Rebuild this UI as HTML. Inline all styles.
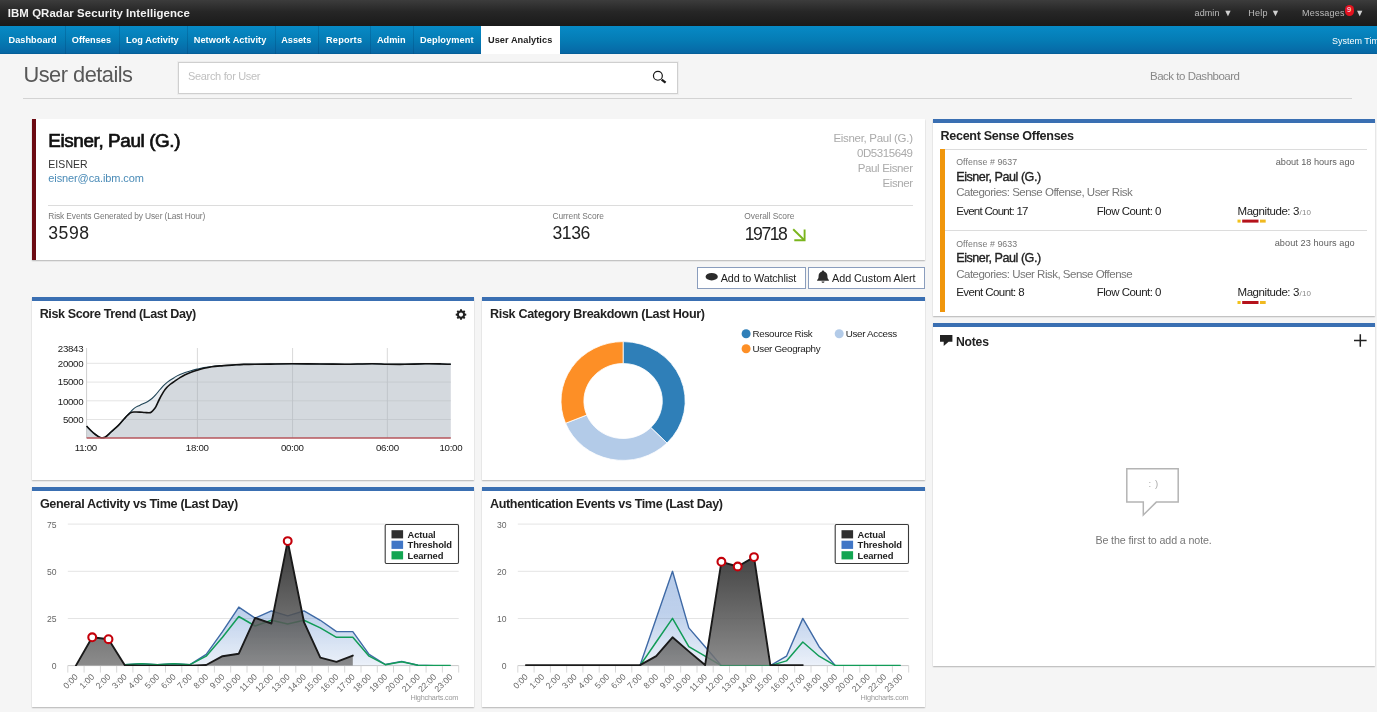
<!DOCTYPE html>
<html lang="en">
<head>
<meta charset="utf-8">
<title>IBM QRadar Security Intelligence - User details</title>
<style>
*{box-sizing:border-box;margin:0;padding:0}
html,body{width:1377px;height:712px;overflow:hidden;background:#f5f5f5;font-family:"Liberation Sans",Arial,sans-serif;color:#222}
.x{position:absolute;white-space:nowrap;z-index:5}
#txt{position:absolute;left:0;top:0;width:1377px;height:712px;z-index:5;will-change:transform}
.b{position:absolute}
#top{left:0;top:0;width:1377px;height:26px;background:linear-gradient(#3c3c3c,#262626 45%,#1a1a1a)}
#nav{left:0;top:26px;width:1377px;height:28px;background:linear-gradient(#078ac6,#057cb5 50%,#0768a5 96%,#04588f)}
.sep{position:absolute;top:26px;width:1px;height:28px;background:rgba(0,50,95,.22)}
#act{left:481px;top:26px;width:78.5px;height:28px;background:#fff}
#badge{left:1344.5px;top:5px;width:9px;height:10.5px;border-radius:4.5px;background:#e2121f}
#badge i{position:absolute;left:0;top:0;width:9px;line-height:10.5px;text-align:center;font-style:normal;font-size:7.5px;color:#fff}
#search{left:178px;top:62px;width:500px;height:31.5px;background:#fff;border:1px solid #cfcfcf;box-shadow:0 0 0 1px rgba(0,0,0,.03)}
#hr{left:23px;top:98px;width:1329px;height:1px;background:#d3d3d3}
.card{position:absolute;background:#fff;box-shadow:0 1px 1.2px rgba(0,0,0,.26)}
.card.bt{border-top:4px solid #3a6fb2}
.ln{position:absolute;height:1px;background:#dcdcdc}
.btn{position:absolute;top:267.2px;height:22px;background:#fff;border:1px solid #8a9dbd}
svg.ov{position:absolute;left:0;top:0;z-index:4;pointer-events:none;will-change:transform}
</style>
</head>
<body>
<div class="b" id="top"></div>
<div class="b" id="nav"></div>
<div class="sep" style="left:65px"></div><div class="sep" style="left:118.5px"></div><div class="sep" style="left:187px"></div>
<div class="sep" style="left:274.5px"></div><div class="sep" style="left:318px"></div><div class="sep" style="left:369.5px"></div>
<div class="sep" style="left:413px"></div>
<div class="b" id="act"></div>
<div class="b" id="badge"><i>9</i></div>
<div class="b" id="search"></div>
<div class="b" id="hr"></div>

<!-- user card -->
<div class="card" style="left:32px;top:118.5px;width:893px;height:141px;border-left:4.5px solid #6c0a12"></div>
<div class="ln" style="left:48px;top:204.5px;width:865px"></div>
<div class="btn" style="left:697px;width:108.6px"></div>
<div class="btn" style="left:808.3px;width:116.6px"></div>

<!-- chart panels -->
<div class="card bt" style="left:32px;top:296.5px;width:442px;height:183px"></div>
<div class="card bt" style="left:482px;top:296.5px;width:443px;height:183px"></div>
<div class="card bt" style="left:32px;top:486.8px;width:442px;height:220.7px"></div>
<div class="card bt" style="left:482px;top:486.8px;width:443px;height:220.7px"></div>

<!-- offenses -->
<div class="card bt" style="left:933px;top:118.6px;width:442px;height:197px"></div>
<div class="ln" style="left:940px;top:149px;width:427px"></div>
<div class="b" style="left:940px;top:149.3px;width:5px;height:162.3px;background:#f0960c"></div>
<div class="ln" style="left:945px;top:230.2px;width:422px"></div>
<!-- notes -->
<div class="card bt" style="left:933px;top:322.6px;width:442px;height:343.2px"></div>

<svg class="ov" width="1377" height="712" viewBox="0 0 1377 712">
<!-- search icon -->
<circle cx="657.9" cy="75.8" r="4.45" fill="none" stroke="#1a1a1a" stroke-width="1.2"/>
<line x1="661.6" y1="79.6" x2="665.6" y2="82.6" stroke="#1a1a1a" stroke-width="2.4" stroke-linecap="butt"/>
<!-- score arrow -->
<g stroke="#7ab51d" stroke-width="1.9" fill="none" stroke-linecap="butt"><path d="M793.2,229.2 L804.4,240.2"/><path d="M794.3,240.2 H804.6 V229.6"/></g>
<!-- eye -->
<ellipse cx="711.7" cy="276.7" rx="6.1" ry="3.7" fill="#2b2b2b"/>
<!-- bell -->
<path d="M823,270.4 c0.7,0 1.1,0.5 1.1,1.1 c2.2,0.6 3.3,2.4 3.3,4.6 c0,2.2 0.5,3.2 1.5,4.0 v0.6 h-11.8 v-0.6 c1,-0.8 1.5,-1.8 1.5,-4.0 c0,-2.2 1.1,-4.0 3.3,-4.6 c0,-0.6 0.4,-1.1 1.1,-1.1z M821.5,281.4 h3 c0,0.8 -0.7,1.3 -1.5,1.3 c-0.8,0 -1.5,-0.5 -1.5,-1.3z" fill="#2b2b2b"/>
<!-- magnitude bars -->
<g id="mag1"><rect x="1237.5" y="219.6" width="3.1" height="3" fill="#f2c21a"/><rect x="1242.2" y="219.6" width="16.3" height="3" fill="#b5121b"/><rect x="1260" y="219.6" width="5.7" height="3" fill="#f0b920"/></g>
<g id="mag2"><rect x="1237.5" y="301" width="3.1" height="3" fill="#f2c21a"/><rect x="1242.2" y="301" width="16.3" height="3" fill="#b5121b"/><rect x="1260" y="301" width="5.7" height="3" fill="#f0b920"/></g>
<!-- notes icon -->
<path d="M940,334.9 H952.4 V341.8 H948.6 L943.7,345.9 V341.8 H940Z" fill="#222"/>
<!-- plus -->
<path d="M1354,340.5 H1366.6 M1360.3,334.2 V346.8" stroke="#222" stroke-width="1.5" fill="none"/>
<!-- bubble -->
<path d="M1126.8,468.7 H1178.2 V502.1 H1156.3 L1143.3,515 V502.1 H1126.8Z" fill="none" stroke="#b4b4b4" stroke-width="1.5" stroke-linejoin="miter"/>
<g font-family="Liberation Sans, Arial, sans-serif" font-size="9.7" fill="#222">
<line x1="86.6" x2="450.8" y1="363.3" y2="363.3" stroke="#e4e4e4" stroke-width="1"/>
<line x1="86.6" x2="450.8" y1="382.1" y2="382.1" stroke="#e4e4e4" stroke-width="1"/>
<line x1="86.6" x2="450.8" y1="400.8" y2="400.8" stroke="#e4e4e4" stroke-width="1"/>
<line x1="86.6" x2="450.8" y1="419.5" y2="419.5" stroke="#e4e4e4" stroke-width="1"/>
<line x1="197.4" x2="197.4" y1="348" y2="438" stroke="#d9d9d9" stroke-width="1"/>
<line x1="292.6" x2="292.6" y1="348" y2="438" stroke="#d9d9d9" stroke-width="1"/>
<line x1="387.3" x2="387.3" y1="348" y2="438" stroke="#d9d9d9" stroke-width="1"/>
<line x1="86.6" x2="86.6" y1="348" y2="438" stroke="#cfcfcf" stroke-width="1"/>
<path d="M86.6,426.2 C87.7,427.2 90.8,430.7 93.0,432.5 C95.2,434.3 97.7,436.4 99.7,437.2 C101.7,438.0 103.1,438.1 105.0,437.2 C106.9,436.3 108.8,434.0 111.0,432.0 C113.2,430.0 116.2,427.7 118.4,425.4 C120.7,423.1 122.5,420.5 124.5,418.3 C126.5,416.1 128.8,413.8 130.4,412.1 C132.1,410.4 132.8,409.2 134.4,408.1 C136.0,407.0 137.8,406.3 140.0,405.2 C142.2,404.1 145.8,402.5 147.8,401.4 C149.8,400.3 150.7,399.6 152.0,398.5 C153.3,397.4 154.5,396.2 155.8,394.7 C157.1,393.2 158.4,391.3 160.0,389.5 C161.6,387.7 163.4,385.6 165.1,384.1 C166.8,382.6 168.4,381.4 170.0,380.3 C171.6,379.2 172.8,378.3 174.5,377.4 C176.2,376.4 178.2,375.4 180.0,374.6 C181.8,373.8 183.3,373.2 185.1,372.6 C186.9,372.0 189.0,371.3 191.0,370.7 C193.0,370.1 194.9,369.6 197.1,369.1 C199.3,368.6 201.6,368.0 204.0,367.6 C206.4,367.2 209.1,366.8 211.8,366.5 C214.5,366.2 217.3,366.0 220.0,365.8 C222.7,365.6 225.1,365.5 227.8,365.3 C230.5,365.1 233.3,365.0 236.0,364.8 C238.7,364.6 240.6,364.5 243.8,364.4 C247.0,364.3 250.6,364.4 255.0,364.3 C259.4,364.2 263.8,364.2 270.0,364.1 C276.2,364.0 283.7,363.8 292.0,363.8 C300.3,363.8 311.2,363.9 320.0,364.0 C328.8,364.1 336.3,364.2 345.0,364.2 C353.7,364.1 365.0,363.7 372.0,363.7 C379.0,363.7 381.5,364.1 387.0,364.2 C392.5,364.3 398.7,364.4 405.0,364.3 C411.3,364.2 419.2,363.9 425.0,363.8 C430.8,363.7 435.7,363.8 440.0,363.9 C444.3,364.0 449.0,364.1 450.8,364.2 L450.8,438 L86.6,438 Z" fill="rgba(150,170,185,0.22)"/>
<path d="M86.6,426.2 C87.7,427.2 90.8,430.7 93.0,432.5 C95.2,434.3 97.7,436.4 99.7,437.2 C101.7,438.0 103.1,438.1 105.0,437.2 C106.9,436.3 108.8,434.0 111.0,432.0 C113.2,430.0 116.2,427.6 118.4,425.4 C120.7,423.1 122.5,420.6 124.5,418.5 C126.5,416.4 128.7,414.0 130.4,412.9 C132.2,411.8 133.4,412.1 135.0,412.0 C136.6,411.9 138.1,412.0 139.8,412.1 C141.5,412.2 143.2,412.4 145.0,412.5 C146.8,412.6 149.1,412.9 150.4,412.6 C151.7,412.3 152.1,411.5 153.0,410.5 C153.9,409.5 154.6,408.9 155.8,406.8 C157.0,404.7 158.4,400.9 160.0,398.0 C161.6,395.1 163.4,391.6 165.1,389.4 C166.8,387.1 168.4,385.8 170.0,384.5 C171.6,383.2 172.8,382.5 174.5,381.4 C176.2,380.2 178.2,378.7 180.0,377.6 C181.8,376.5 183.3,375.6 185.1,374.7 C186.9,373.8 189.0,372.9 191.0,372.2 C193.0,371.4 194.9,370.8 197.1,370.2 C199.3,369.6 201.6,368.9 204.0,368.3 C206.4,367.7 209.1,367.1 211.8,366.7 C214.5,366.3 217.3,366.1 220.0,365.9 C222.7,365.7 225.1,365.6 227.8,365.4 C230.5,365.2 233.3,365.0 236.0,364.8 C238.7,364.6 240.6,364.5 243.8,364.4 C247.0,364.3 250.6,364.4 255.0,364.3 C259.4,364.2 263.8,364.2 270.0,364.1 C276.2,364.0 283.7,363.8 292.0,363.8 C300.3,363.8 311.2,363.9 320.0,364.0 C328.8,364.1 336.3,364.2 345.0,364.2 C353.7,364.1 365.0,363.7 372.0,363.7 C379.0,363.7 381.5,364.1 387.0,364.2 C392.5,364.3 398.7,364.4 405.0,364.3 C411.3,364.2 419.2,363.9 425.0,363.8 C430.8,363.7 435.7,363.8 440.0,363.9 C444.3,364.0 449.0,364.1 450.8,364.2 L450.8,438 L86.6,438 Z" fill="rgba(160,168,175,0.28)"/>
<path d="M86.6,426.2 C87.7,427.2 90.8,430.7 93.0,432.5 C95.2,434.3 97.7,436.4 99.7,437.2 C101.7,438.0 103.1,438.1 105.0,437.2 C106.9,436.3 108.8,434.0 111.0,432.0 C113.2,430.0 116.2,427.7 118.4,425.4 C120.7,423.1 122.5,420.5 124.5,418.3 C126.5,416.1 128.8,413.8 130.4,412.1 C132.1,410.4 132.8,409.2 134.4,408.1 C136.0,407.0 137.8,406.3 140.0,405.2 C142.2,404.1 145.8,402.5 147.8,401.4 C149.8,400.3 150.7,399.6 152.0,398.5 C153.3,397.4 154.5,396.2 155.8,394.7 C157.1,393.2 158.4,391.3 160.0,389.5 C161.6,387.7 163.4,385.6 165.1,384.1 C166.8,382.6 168.4,381.4 170.0,380.3 C171.6,379.2 172.8,378.3 174.5,377.4 C176.2,376.4 178.2,375.4 180.0,374.6 C181.8,373.8 183.3,373.2 185.1,372.6 C186.9,372.0 189.0,371.3 191.0,370.7 C193.0,370.1 194.9,369.6 197.1,369.1 C199.3,368.6 201.6,368.0 204.0,367.6 C206.4,367.2 209.1,366.8 211.8,366.5 C214.5,366.2 217.3,366.0 220.0,365.8 C222.7,365.6 225.1,365.5 227.8,365.3 C230.5,365.1 233.3,365.0 236.0,364.8 C238.7,364.6 240.6,364.5 243.8,364.4 C247.0,364.3 250.6,364.4 255.0,364.3 C259.4,364.2 263.8,364.2 270.0,364.1 C276.2,364.0 283.7,363.8 292.0,363.8 C300.3,363.8 311.2,363.9 320.0,364.0 C328.8,364.1 336.3,364.2 345.0,364.2 C353.7,364.1 365.0,363.7 372.0,363.7 C379.0,363.7 381.5,364.1 387.0,364.2 C392.5,364.3 398.7,364.4 405.0,364.3 C411.3,364.2 419.2,363.9 425.0,363.8 C430.8,363.7 435.7,363.8 440.0,363.9 C444.3,364.0 449.0,364.1 450.8,364.2" fill="none" stroke="#1f4456" stroke-width="1.1"/>
<path d="M86.6,426.2 C87.7,427.2 90.8,430.7 93.0,432.5 C95.2,434.3 97.7,436.4 99.7,437.2 C101.7,438.0 103.1,438.1 105.0,437.2 C106.9,436.3 108.8,434.0 111.0,432.0 C113.2,430.0 116.2,427.6 118.4,425.4 C120.7,423.1 122.5,420.6 124.5,418.5 C126.5,416.4 128.7,414.0 130.4,412.9 C132.2,411.8 133.4,412.1 135.0,412.0 C136.6,411.9 138.1,412.0 139.8,412.1 C141.5,412.2 143.2,412.4 145.0,412.5 C146.8,412.6 149.1,412.9 150.4,412.6 C151.7,412.3 152.1,411.5 153.0,410.5 C153.9,409.5 154.6,408.9 155.8,406.8 C157.0,404.7 158.4,400.9 160.0,398.0 C161.6,395.1 163.4,391.6 165.1,389.4 C166.8,387.1 168.4,385.8 170.0,384.5 C171.6,383.2 172.8,382.5 174.5,381.4 C176.2,380.2 178.2,378.7 180.0,377.6 C181.8,376.5 183.3,375.6 185.1,374.7 C186.9,373.8 189.0,372.9 191.0,372.2 C193.0,371.4 194.9,370.8 197.1,370.2 C199.3,369.6 201.6,368.9 204.0,368.3 C206.4,367.7 209.1,367.1 211.8,366.7 C214.5,366.3 217.3,366.1 220.0,365.9 C222.7,365.7 225.1,365.6 227.8,365.4 C230.5,365.2 233.3,365.0 236.0,364.8 C238.7,364.6 240.6,364.5 243.8,364.4 C247.0,364.3 250.6,364.4 255.0,364.3 C259.4,364.2 263.8,364.2 270.0,364.1 C276.2,364.0 283.7,363.8 292.0,363.8 C300.3,363.8 311.2,363.9 320.0,364.0 C328.8,364.1 336.3,364.2 345.0,364.2 C353.7,364.1 365.0,363.7 372.0,363.7 C379.0,363.7 381.5,364.1 387.0,364.2 C392.5,364.3 398.7,364.4 405.0,364.3 C411.3,364.2 419.2,363.9 425.0,363.8 C430.8,363.7 435.7,363.8 440.0,363.9 C444.3,364.0 449.0,364.1 450.8,364.2" fill="none" stroke="#111" stroke-width="1.6" stroke-linejoin="round"/>
<line x1="86.6" x2="450.8" y1="437.9" y2="437.9" stroke="#b6565c" stroke-width="1.5"/>
<text x="83.3" y="352.1" text-anchor="end" letter-spacing="-0.3">23843</text>
<text x="83.3" y="366.8" text-anchor="end" letter-spacing="-0.3">20000</text>
<text x="83.3" y="385.3" text-anchor="end" letter-spacing="-0.3">15000</text>
<text x="83.3" y="404.5" text-anchor="end" letter-spacing="-0.3">10000</text>
<text x="83.3" y="423.1" text-anchor="end" letter-spacing="-0.3">5000</text>
<text x="85.8" y="451" text-anchor="middle" letter-spacing="-0.3">11:00</text>
<text x="197.2" y="451" text-anchor="middle" letter-spacing="-0.3">18:00</text>
<text x="292.3" y="451" text-anchor="middle" letter-spacing="-0.3">00:00</text>
<text x="387.4" y="451" text-anchor="middle" letter-spacing="-0.3">06:00</text>
<text x="450.9" y="451" text-anchor="middle" letter-spacing="-0.3">10:00</text>
<path d="M459.89,310.60 L460.09,309.33 L461.91,309.33 L462.11,310.60 L463.05,310.99 L464.09,310.23 L465.37,311.51 L464.61,312.55 L465.00,313.49 L466.27,313.69 L466.27,315.51 L465.00,315.71 L464.61,316.65 L465.37,317.69 L464.09,318.97 L463.05,318.21 L462.11,318.60 L461.91,319.87 L460.09,319.87 L459.89,318.60 L458.95,318.21 L457.91,318.97 L456.63,317.69 L457.39,316.65 L457.00,315.71 L455.73,315.51 L455.73,313.69 L457.00,313.49 L457.39,312.55 L456.63,311.51 L457.91,310.23 L458.95,310.99Z M463.1,314.6 a2.1,2.1 0 1,0 -4.2,0 a2.1,2.1 0 1,0 4.2,0Z" fill="#222" fill-rule="evenodd"/>
</g>
<path d="M623.10,341.60 A62.1,59.4 0 0 1 667.01,443.00 L650.82,427.52 A39.2,37.5 0 0 0 623.10,363.50Z" fill="#2f7fb8" stroke="#fff" stroke-width="0.8"/>
<path d="M667.01,443.00 A62.1,59.4 0 0 1 565.52,423.25 L586.75,415.05 A39.2,37.5 0 0 0 650.82,427.52Z" fill="#b3cbe8" stroke="#fff" stroke-width="0.8"/>
<path d="M565.52,423.25 A62.1,59.4 0 0 1 623.10,341.60 L623.10,363.50 A39.2,37.5 0 0 0 586.75,415.05Z" fill="#fd8f26" stroke="#fff" stroke-width="0.8"/>
<circle cx="746.1" cy="333.7" r="4.5" fill="#2f7fb8"/>
<circle cx="839.2" cy="333.7" r="4.5" fill="#b3cbe8"/>
<circle cx="746.1" cy="348.8" r="4.5" fill="#fd8f26"/>
<defs><linearGradient id="gag" gradientUnits="userSpaceOnUse" x1="0" y1="545" x2="0" y2="666"><stop offset="0" stop-color="#1b1b1b" stop-opacity="0.85"/><stop offset="1" stop-color="#787878" stop-opacity="0.85"/></linearGradient><linearGradient id="gtg" gradientUnits="userSpaceOnUse" x1="0" y1="570" x2="0" y2="666"><stop offset="0" stop-color="#4076c6" stop-opacity="0.38"/><stop offset="0.45" stop-color="#4076c6" stop-opacity="0.34"/><stop offset="1" stop-color="#4076c6" stop-opacity="0.1"/></linearGradient></defs>
<clipPath id="cpg"><rect x="62.8" y="515" width="400.9" height="151"/></clipPath>
<g font-family="Liberation Sans, Arial, sans-serif" font-size="8.6" fill="#666">
<line x1="67.8" x2="458.7" y1="524.1" y2="524.1" stroke="#e4e4e4" stroke-width="1"/>
<text x="56.6" y="527.6" text-anchor="end">75</text>
<line x1="67.8" x2="458.7" y1="571.3" y2="571.3" stroke="#e4e4e4" stroke-width="1"/>
<text x="56.6" y="574.8" text-anchor="end">50</text>
<line x1="67.8" x2="458.7" y1="618.5" y2="618.5" stroke="#e4e4e4" stroke-width="1"/>
<text x="56.6" y="622.0" text-anchor="end">25</text>
<line x1="67.8" x2="458.7" y1="665.6" y2="665.6" stroke="#c8c8c8" stroke-width="1"/>
<text x="56.6" y="669.1" text-anchor="end">0</text>
<line x1="67.8" x2="67.8" y1="665.6" y2="672.6" stroke="#d8d8d8" stroke-width="1"/>
<line x1="84.1" x2="84.1" y1="665.6" y2="672.6" stroke="#d8d8d8" stroke-width="1"/>
<line x1="100.4" x2="100.4" y1="665.6" y2="672.6" stroke="#d8d8d8" stroke-width="1"/>
<line x1="116.7" x2="116.7" y1="665.6" y2="672.6" stroke="#d8d8d8" stroke-width="1"/>
<line x1="132.9" x2="132.9" y1="665.6" y2="672.6" stroke="#d8d8d8" stroke-width="1"/>
<line x1="149.2" x2="149.2" y1="665.6" y2="672.6" stroke="#d8d8d8" stroke-width="1"/>
<line x1="165.5" x2="165.5" y1="665.6" y2="672.6" stroke="#d8d8d8" stroke-width="1"/>
<line x1="181.8" x2="181.8" y1="665.6" y2="672.6" stroke="#d8d8d8" stroke-width="1"/>
<line x1="198.1" x2="198.1" y1="665.6" y2="672.6" stroke="#d8d8d8" stroke-width="1"/>
<line x1="214.4" x2="214.4" y1="665.6" y2="672.6" stroke="#d8d8d8" stroke-width="1"/>
<line x1="230.7" x2="230.7" y1="665.6" y2="672.6" stroke="#d8d8d8" stroke-width="1"/>
<line x1="247.0" x2="247.0" y1="665.6" y2="672.6" stroke="#d8d8d8" stroke-width="1"/>
<line x1="263.2" x2="263.2" y1="665.6" y2="672.6" stroke="#d8d8d8" stroke-width="1"/>
<line x1="279.5" x2="279.5" y1="665.6" y2="672.6" stroke="#d8d8d8" stroke-width="1"/>
<line x1="295.8" x2="295.8" y1="665.6" y2="672.6" stroke="#d8d8d8" stroke-width="1"/>
<line x1="312.1" x2="312.1" y1="665.6" y2="672.6" stroke="#d8d8d8" stroke-width="1"/>
<line x1="328.4" x2="328.4" y1="665.6" y2="672.6" stroke="#d8d8d8" stroke-width="1"/>
<line x1="344.7" x2="344.7" y1="665.6" y2="672.6" stroke="#d8d8d8" stroke-width="1"/>
<line x1="361.0" x2="361.0" y1="665.6" y2="672.6" stroke="#d8d8d8" stroke-width="1"/>
<line x1="377.3" x2="377.3" y1="665.6" y2="672.6" stroke="#d8d8d8" stroke-width="1"/>
<line x1="393.5" x2="393.5" y1="665.6" y2="672.6" stroke="#d8d8d8" stroke-width="1"/>
<line x1="409.8" x2="409.8" y1="665.6" y2="672.6" stroke="#d8d8d8" stroke-width="1"/>
<line x1="426.1" x2="426.1" y1="665.6" y2="672.6" stroke="#d8d8d8" stroke-width="1"/>
<line x1="442.4" x2="442.4" y1="665.6" y2="672.6" stroke="#d8d8d8" stroke-width="1"/>
<line x1="458.7" x2="458.7" y1="665.6" y2="672.6" stroke="#d8d8d8" stroke-width="1"/>
<text transform="translate(78.5,677.4) rotate(-45)" text-anchor="end">0:00</text>
<text transform="translate(94.8,677.4) rotate(-45)" text-anchor="end">1:00</text>
<text transform="translate(111.1,677.4) rotate(-45)" text-anchor="end">2:00</text>
<text transform="translate(127.4,677.4) rotate(-45)" text-anchor="end">3:00</text>
<text transform="translate(143.7,677.4) rotate(-45)" text-anchor="end">4:00</text>
<text transform="translate(160.0,677.4) rotate(-45)" text-anchor="end">5:00</text>
<text transform="translate(176.3,677.4) rotate(-45)" text-anchor="end">6:00</text>
<text transform="translate(192.6,677.4) rotate(-45)" text-anchor="end">7:00</text>
<text transform="translate(208.8,677.4) rotate(-45)" text-anchor="end">8:00</text>
<text transform="translate(225.1,677.4) rotate(-45)" text-anchor="end">9:00</text>
<text transform="translate(241.4,677.4) rotate(-45)" text-anchor="end">10:00</text>
<text transform="translate(257.7,677.4) rotate(-45)" text-anchor="end">11:00</text>
<text transform="translate(274.0,677.4) rotate(-45)" text-anchor="end">12:00</text>
<text transform="translate(290.3,677.4) rotate(-45)" text-anchor="end">13:00</text>
<text transform="translate(306.6,677.4) rotate(-45)" text-anchor="end">14:00</text>
<text transform="translate(322.9,677.4) rotate(-45)" text-anchor="end">15:00</text>
<text transform="translate(339.1,677.4) rotate(-45)" text-anchor="end">16:00</text>
<text transform="translate(355.4,677.4) rotate(-45)" text-anchor="end">17:00</text>
<text transform="translate(371.7,677.4) rotate(-45)" text-anchor="end">18:00</text>
<text transform="translate(388.0,677.4) rotate(-45)" text-anchor="end">19:00</text>
<text transform="translate(404.3,677.4) rotate(-45)" text-anchor="end">20:00</text>
<text transform="translate(420.6,677.4) rotate(-45)" text-anchor="end">21:00</text>
<text transform="translate(436.9,677.4) rotate(-45)" text-anchor="end">22:00</text>
<text transform="translate(453.2,677.4) rotate(-45)" text-anchor="end">23:00</text>
<g clip-path="url(#cpg)">
<polygon points="124.8,665.6 124.8,664.7 141.1,663.7 157.4,664.7 173.7,663.7 190.0,664.7 206.2,654.3 222.5,631.6 238.8,607.1 255.1,618.1 271.4,610.9 287.7,615.8 304.0,610.9 320.3,620.3 336.5,631.6 352.8,631.6 369.1,654.3 385.4,664.5 401.7,661.4 418.0,665.2 434.3,665.6 450.6,665.6 450.6,665.6" fill="url(#gtg)"/>
<polyline points="124.8,664.7 141.1,663.7 157.4,664.7 173.7,663.7 190.0,664.7 206.2,654.3 222.5,631.6 238.8,607.1 255.1,618.1 271.4,610.9 287.7,615.8 304.0,610.9 320.3,620.3 336.5,631.6 352.8,631.6 369.1,654.3 385.4,664.5 401.7,661.4 418.0,665.2 434.3,665.6 450.6,665.6" fill="none" stroke="#3f6aa6" stroke-width="1.4" stroke-linejoin="round"/>
<polyline points="124.8,664.7 141.1,663.7 157.4,664.7 173.7,663.7 190.0,664.7 206.2,656.2 222.5,637.3 238.8,616.5 255.1,626.0 271.4,620.3 287.7,624.1 304.0,620.3 320.3,627.9 336.5,637.3 352.8,637.3 369.1,656.2 385.4,664.7 401.7,661.8 418.0,665.2 434.3,665.6 450.6,665.6" fill="none" stroke="#129c58" stroke-width="1.5" stroke-linejoin="round"/>
<polygon points="75.9,665.6 75.9,665.6 92.2,637.3 108.5,639.2 124.8,665.2 141.1,665.6 157.4,665.6 173.7,665.6 190.0,665.6 206.2,665.0 222.5,656.2 238.8,653.7 255.1,617.9 271.4,623.5 287.7,541.1 304.0,622.2 320.3,657.7 336.5,661.8 352.8,655.6 352.8,665.6" fill="url(#gag)"/>
<polyline points="75.9,665.6 92.2,637.3 108.5,639.2 124.8,665.2 141.1,665.6 157.4,665.6 173.7,665.6 190.0,665.6 206.2,665.0 222.5,656.2 238.8,653.7 255.1,617.9 271.4,623.5 287.7,541.1 304.0,622.2 320.3,657.7 336.5,661.8 352.8,655.6" fill="none" stroke="#1a1a1a" stroke-width="1.9" stroke-linejoin="round" stroke-linecap="round"/>
</g>
<circle cx="92.2" cy="637.3" r="3.9" fill="#fff" stroke="#c4000a" stroke-width="2.1"/>
<circle cx="108.5" cy="639.2" r="3.9" fill="#fff" stroke="#c4000a" stroke-width="2.1"/>
<circle cx="287.7" cy="541.1" r="3.9" fill="#fff" stroke="#c4000a" stroke-width="2.1"/>
<rect x="385.2" y="524.5" width="73.3" height="39" rx="1.2" fill="#fff" stroke="#3a3a3a" stroke-width="1.1"/>
<rect x="391.5" y="530.2" width="11.6" height="8.2" fill="#2f2f2f"/>
<text x="407.5" y="537.7" font-weight="bold" font-size="9.4" fill="#222" letter-spacing="-0.1">Actual</text>
<rect x="391.5" y="540.7" width="11.6" height="8.2" fill="#4076c6"/>
<text x="407.5" y="548.2" font-weight="bold" font-size="9.4" fill="#222" letter-spacing="-0.1">Threshold</text>
<rect x="391.5" y="551.2" width="11.6" height="8.2" fill="#12a552"/>
<text x="407.5" y="558.7" font-weight="bold" font-size="9.4" fill="#222" letter-spacing="-0.1">Learned</text>
</g>
<defs><linearGradient id="gaa" gradientUnits="userSpaceOnUse" x1="0" y1="545" x2="0" y2="666"><stop offset="0" stop-color="#1b1b1b" stop-opacity="0.85"/><stop offset="1" stop-color="#787878" stop-opacity="0.85"/></linearGradient><linearGradient id="gta" gradientUnits="userSpaceOnUse" x1="0" y1="570" x2="0" y2="666"><stop offset="0" stop-color="#4076c6" stop-opacity="0.38"/><stop offset="0.45" stop-color="#4076c6" stop-opacity="0.34"/><stop offset="1" stop-color="#4076c6" stop-opacity="0.1"/></linearGradient></defs>
<clipPath id="cpa"><rect x="512.8" y="515" width="400.9" height="151"/></clipPath>
<g font-family="Liberation Sans, Arial, sans-serif" font-size="8.6" fill="#666">
<line x1="517.8" x2="908.7" y1="524.1" y2="524.1" stroke="#e4e4e4" stroke-width="1"/>
<text x="506.6" y="527.6" text-anchor="end">30</text>
<line x1="517.8" x2="908.7" y1="571.3" y2="571.3" stroke="#e4e4e4" stroke-width="1"/>
<text x="506.6" y="574.8" text-anchor="end">20</text>
<line x1="517.8" x2="908.7" y1="618.5" y2="618.5" stroke="#e4e4e4" stroke-width="1"/>
<text x="506.6" y="622.0" text-anchor="end">10</text>
<line x1="517.8" x2="908.7" y1="665.6" y2="665.6" stroke="#c8c8c8" stroke-width="1"/>
<text x="506.6" y="669.1" text-anchor="end">0</text>
<line x1="517.8" x2="517.8" y1="665.6" y2="672.6" stroke="#d8d8d8" stroke-width="1"/>
<line x1="534.1" x2="534.1" y1="665.6" y2="672.6" stroke="#d8d8d8" stroke-width="1"/>
<line x1="550.4" x2="550.4" y1="665.6" y2="672.6" stroke="#d8d8d8" stroke-width="1"/>
<line x1="566.7" x2="566.7" y1="665.6" y2="672.6" stroke="#d8d8d8" stroke-width="1"/>
<line x1="582.9" x2="582.9" y1="665.6" y2="672.6" stroke="#d8d8d8" stroke-width="1"/>
<line x1="599.2" x2="599.2" y1="665.6" y2="672.6" stroke="#d8d8d8" stroke-width="1"/>
<line x1="615.5" x2="615.5" y1="665.6" y2="672.6" stroke="#d8d8d8" stroke-width="1"/>
<line x1="631.8" x2="631.8" y1="665.6" y2="672.6" stroke="#d8d8d8" stroke-width="1"/>
<line x1="648.1" x2="648.1" y1="665.6" y2="672.6" stroke="#d8d8d8" stroke-width="1"/>
<line x1="664.4" x2="664.4" y1="665.6" y2="672.6" stroke="#d8d8d8" stroke-width="1"/>
<line x1="680.7" x2="680.7" y1="665.6" y2="672.6" stroke="#d8d8d8" stroke-width="1"/>
<line x1="697.0" x2="697.0" y1="665.6" y2="672.6" stroke="#d8d8d8" stroke-width="1"/>
<line x1="713.2" x2="713.2" y1="665.6" y2="672.6" stroke="#d8d8d8" stroke-width="1"/>
<line x1="729.5" x2="729.5" y1="665.6" y2="672.6" stroke="#d8d8d8" stroke-width="1"/>
<line x1="745.8" x2="745.8" y1="665.6" y2="672.6" stroke="#d8d8d8" stroke-width="1"/>
<line x1="762.1" x2="762.1" y1="665.6" y2="672.6" stroke="#d8d8d8" stroke-width="1"/>
<line x1="778.4" x2="778.4" y1="665.6" y2="672.6" stroke="#d8d8d8" stroke-width="1"/>
<line x1="794.7" x2="794.7" y1="665.6" y2="672.6" stroke="#d8d8d8" stroke-width="1"/>
<line x1="811.0" x2="811.0" y1="665.6" y2="672.6" stroke="#d8d8d8" stroke-width="1"/>
<line x1="827.3" x2="827.3" y1="665.6" y2="672.6" stroke="#d8d8d8" stroke-width="1"/>
<line x1="843.5" x2="843.5" y1="665.6" y2="672.6" stroke="#d8d8d8" stroke-width="1"/>
<line x1="859.8" x2="859.8" y1="665.6" y2="672.6" stroke="#d8d8d8" stroke-width="1"/>
<line x1="876.1" x2="876.1" y1="665.6" y2="672.6" stroke="#d8d8d8" stroke-width="1"/>
<line x1="892.4" x2="892.4" y1="665.6" y2="672.6" stroke="#d8d8d8" stroke-width="1"/>
<line x1="908.7" x2="908.7" y1="665.6" y2="672.6" stroke="#d8d8d8" stroke-width="1"/>
<text transform="translate(528.5,677.4) rotate(-45)" text-anchor="end">0:00</text>
<text transform="translate(544.8,677.4) rotate(-45)" text-anchor="end">1:00</text>
<text transform="translate(561.1,677.4) rotate(-45)" text-anchor="end">2:00</text>
<text transform="translate(577.4,677.4) rotate(-45)" text-anchor="end">3:00</text>
<text transform="translate(593.7,677.4) rotate(-45)" text-anchor="end">4:00</text>
<text transform="translate(610.0,677.4) rotate(-45)" text-anchor="end">5:00</text>
<text transform="translate(626.3,677.4) rotate(-45)" text-anchor="end">6:00</text>
<text transform="translate(642.6,677.4) rotate(-45)" text-anchor="end">7:00</text>
<text transform="translate(658.8,677.4) rotate(-45)" text-anchor="end">8:00</text>
<text transform="translate(675.1,677.4) rotate(-45)" text-anchor="end">9:00</text>
<text transform="translate(691.4,677.4) rotate(-45)" text-anchor="end">10:00</text>
<text transform="translate(707.7,677.4) rotate(-45)" text-anchor="end">11:00</text>
<text transform="translate(724.0,677.4) rotate(-45)" text-anchor="end">12:00</text>
<text transform="translate(740.3,677.4) rotate(-45)" text-anchor="end">13:00</text>
<text transform="translate(756.6,677.4) rotate(-45)" text-anchor="end">14:00</text>
<text transform="translate(772.9,677.4) rotate(-45)" text-anchor="end">15:00</text>
<text transform="translate(789.1,677.4) rotate(-45)" text-anchor="end">16:00</text>
<text transform="translate(805.4,677.4) rotate(-45)" text-anchor="end">17:00</text>
<text transform="translate(821.7,677.4) rotate(-45)" text-anchor="end">18:00</text>
<text transform="translate(838.0,677.4) rotate(-45)" text-anchor="end">19:00</text>
<text transform="translate(854.3,677.4) rotate(-45)" text-anchor="end">20:00</text>
<text transform="translate(870.6,677.4) rotate(-45)" text-anchor="end">21:00</text>
<text transform="translate(886.9,677.4) rotate(-45)" text-anchor="end">22:00</text>
<text transform="translate(903.2,677.4) rotate(-45)" text-anchor="end">23:00</text>
<g clip-path="url(#cpa)">
<polygon points="640.0,665.6 640.0,665.6 656.2,618.4 672.5,571.3 688.8,627.9 705.1,646.7 721.4,665.6 737.7,665.6 754.0,665.6 770.3,665.6 786.5,656.2 802.8,618.4 819.1,646.7 835.4,665.6 851.7,665.6 868.0,665.6 884.3,665.6 900.6,665.6 900.6,665.6" fill="url(#gta)"/>
<polyline points="640.0,665.6 656.2,618.4 672.5,571.3 688.8,627.9 705.1,646.7 721.4,665.6 737.7,665.6 754.0,665.6 770.3,665.6 786.5,656.2 802.8,618.4 819.1,646.7 835.4,665.6 851.7,665.6 868.0,665.6 884.3,665.6 900.6,665.6" fill="none" stroke="#3f6aa6" stroke-width="1.4" stroke-linejoin="round"/>
<polyline points="640.0,665.6 656.2,642.0 672.5,618.4 688.8,646.7 705.1,656.2 721.4,665.6 737.7,665.6 754.0,665.6 770.3,665.6 786.5,660.9 802.8,642.0 819.1,656.2 835.4,665.6 851.7,665.6 868.0,665.6 884.3,665.6 900.6,665.6" fill="none" stroke="#129c58" stroke-width="1.5" stroke-linejoin="round"/>
<polygon points="525.9,665.6 525.9,665.1 542.2,665.1 558.5,665.1 574.8,665.1 591.1,665.1 607.4,665.1 623.7,665.1 640.0,665.1 656.2,656.2 672.5,637.3 688.8,651.4 705.1,665.1 721.4,561.8 737.7,566.5 754.0,557.1 770.3,665.1 786.5,665.1 802.8,665.1 802.8,665.6" fill="url(#gaa)"/>
<polyline points="525.9,665.1 542.2,665.1 558.5,665.1 574.8,665.1 591.1,665.1 607.4,665.1 623.7,665.1 640.0,665.1 656.2,656.2 672.5,637.3 688.8,651.4 705.1,665.1 721.4,561.8 737.7,566.5 754.0,557.1 770.3,665.1 786.5,665.1 802.8,665.1" fill="none" stroke="#1a1a1a" stroke-width="1.9" stroke-linejoin="round" stroke-linecap="round"/>
</g>
<circle cx="721.4" cy="561.8" r="3.9" fill="#fff" stroke="#c4000a" stroke-width="2.1"/>
<circle cx="737.7" cy="566.5" r="3.9" fill="#fff" stroke="#c4000a" stroke-width="2.1"/>
<circle cx="754.0" cy="557.1" r="3.9" fill="#fff" stroke="#c4000a" stroke-width="2.1"/>
<rect x="835.2" y="524.5" width="73.3" height="39" rx="1.2" fill="#fff" stroke="#3a3a3a" stroke-width="1.1"/>
<rect x="841.5" y="530.2" width="11.6" height="8.2" fill="#2f2f2f"/>
<text x="857.5" y="537.7" font-weight="bold" font-size="9.4" fill="#222" letter-spacing="-0.1">Actual</text>
<rect x="841.5" y="540.7" width="11.6" height="8.2" fill="#4076c6"/>
<text x="857.5" y="548.2" font-weight="bold" font-size="9.4" fill="#222" letter-spacing="-0.1">Threshold</text>
<rect x="841.5" y="551.2" width="11.6" height="8.2" fill="#12a552"/>
<text x="857.5" y="558.7" font-weight="bold" font-size="9.4" fill="#222" letter-spacing="-0.1">Learned</text>
</g>
</svg>
<div id="txt">
<div class="x" style="left:7.75px;top:8px;font-size:11.4px;line-height:11.4px;color:#f2f2f2;font-weight:bold;letter-spacing:0.092px;">IBM QRadar Security Intelligence</div>
<div class="x" style="left:1194.50px;top:9px;font-size:9px;line-height:9px;color:#bcbcbc;letter-spacing:0.121px;">admin</div>
<div class="x" style="left:1223.60px;top:9px;font-size:9px;line-height:9px;color:#d0d0d0;">▼</div>
<div class="x" style="left:1248.20px;top:9px;font-size:9px;line-height:9px;color:#bcbcbc;letter-spacing:0.261px;">Help</div>
<div class="x" style="left:1271.10px;top:9px;font-size:9px;line-height:9px;color:#d0d0d0;">▼</div>
<div class="x" style="left:1302.00px;top:9px;font-size:9px;line-height:9px;color:#bcbcbc;letter-spacing:0.210px;">Messages</div>
<div class="x" style="left:1355.30px;top:9px;font-size:9px;line-height:9px;color:#d0d0d0;">▼</div>
<div class="x" style="left:8.50px;top:36px;font-size:9.2px;line-height:9.2px;color:#fff;font-weight:bold;letter-spacing:0.031px;">Dashboard</div>
<div class="x" style="left:71.75px;top:36px;font-size:9.2px;line-height:9.2px;color:#fff;font-weight:bold;letter-spacing:-0.011px;">Offenses</div>
<div class="x" style="left:126.00px;top:36px;font-size:9.2px;line-height:9.2px;color:#fff;font-weight:bold;letter-spacing:0.045px;">Log Activity</div>
<div class="x" style="left:193.75px;top:36px;font-size:9.2px;line-height:9.2px;color:#fff;font-weight:bold;letter-spacing:0.056px;">Network Activity</div>
<div class="x" style="left:281.25px;top:36px;font-size:9.2px;line-height:9.2px;color:#fff;font-weight:bold;letter-spacing:-0.028px;">Assets</div>
<div class="x" style="left:326.00px;top:36px;font-size:9.2px;line-height:9.2px;color:#fff;font-weight:bold;letter-spacing:0.214px;">Reports</div>
<div class="x" style="left:377.00px;top:36px;font-size:9.2px;line-height:9.2px;color:#fff;font-weight:bold;letter-spacing:-0.023px;">Admin</div>
<div class="x" style="left:420.00px;top:36px;font-size:9.2px;line-height:9.2px;color:#fff;font-weight:bold;letter-spacing:0.101px;">Deployment</div>
<div class="x" style="left:488.00px;top:36px;font-size:9.2px;line-height:9.2px;color:#222;font-weight:bold;letter-spacing:0.058px;">User Analytics</div>
<div class="x" style="left:1332.00px;top:37px;font-size:9px;line-height:9px;color:#fff;">System Time</div>
<div class="x" style="left:23.50px;top:64px;font-size:21.8px;line-height:21.8px;color:#585858;letter-spacing:-0.509px;">User details</div>
<div class="x" style="left:188.00px;top:71px;font-size:11px;line-height:11px;color:#c0c0c0;letter-spacing:-0.324px;">Search for User</div>
<div class="x" style="left:1150.00px;top:71px;font-size:11.5px;line-height:11.5px;color:#888;letter-spacing:-0.488px;">Back to Dashboard</div>
<div class="x" style="left:48.30px;top:132px;font-size:18.9px;line-height:18.9px;color:#111;letter-spacing:-0.400px;-webkit-text-stroke:0.7px #111;">Eisner, Paul (G.)</div>
<div class="x" style="left:48.30px;top:159px;font-size:10.5px;line-height:10.5px;color:#333;letter-spacing:0.061px;">EISNER</div>
<div class="x" style="left:48.30px;top:173px;font-size:11px;line-height:11px;color:#4a8bb7;letter-spacing:-0.111px;">eisner@ca.ibm.com</div>
<div class="x" style="left:48.30px;top:212px;font-size:8.4px;line-height:8.4px;color:#777;letter-spacing:-0.113px;">Risk Events Generated by User (Last Hour)</div>
<div class="x" style="left:48.30px;top:225px;font-size:17.6px;line-height:17.6px;color:#222;letter-spacing:0.520px;">3598</div>
<div class="x" style="left:552.50px;top:212px;font-size:8.4px;line-height:8.4px;color:#777;letter-spacing:-0.053px;">Current Score</div>
<div class="x" style="left:552.50px;top:225px;font-size:17.6px;line-height:17.6px;color:#222;letter-spacing:-0.447px;">3136</div>
<div class="x" style="left:744.30px;top:212px;font-size:8.4px;line-height:8.4px;color:#777;letter-spacing:-0.061px;">Overall Score</div>
<div class="x" style="left:744.80px;top:226px;font-size:17.6px;line-height:17.6px;color:#222;letter-spacing:-1.484px;">19718</div>
<div class="x" style="left:833.40px;top:133px;font-size:11.5px;line-height:11.5px;color:#aaa;letter-spacing:-0.298px;">Eisner, Paul (G.)</div>
<div class="x" style="left:857.00px;top:148px;font-size:11.5px;line-height:11.5px;color:#aaa;letter-spacing:-0.436px;">0D5315649</div>
<div class="x" style="left:857.70px;top:163px;font-size:11.5px;line-height:11.5px;color:#aaa;letter-spacing:-0.351px;">Paul Eisner</div>
<div class="x" style="left:882.50px;top:178px;font-size:11.5px;line-height:11.5px;color:#aaa;letter-spacing:-0.422px;">Eisner</div>
<div class="x" style="left:720.80px;top:273px;font-size:10.8px;line-height:10.8px;color:#222;letter-spacing:-0.147px;">Add to Watchlist</div>
<div class="x" style="left:832.00px;top:273px;font-size:10.8px;line-height:10.8px;color:#222;letter-spacing:-0.028px;">Add Custom Alert</div>
<div class="x" style="left:39.70px;top:308px;font-size:12.6px;line-height:12.6px;color:#222;font-weight:bold;letter-spacing:-0.411px;">Risk Score Trend (Last Day)</div>
<div class="x" style="left:490.00px;top:308px;font-size:12.6px;line-height:12.6px;color:#222;font-weight:bold;letter-spacing:-0.345px;">Risk Category Breakdown (Last Hour)</div>
<div class="x" style="left:39.90px;top:498px;font-size:12.6px;line-height:12.6px;color:#222;font-weight:bold;letter-spacing:-0.344px;">General Activity vs Time (Last Day)</div>
<div class="x" style="left:490.00px;top:498px;font-size:12.6px;line-height:12.6px;color:#222;font-weight:bold;letter-spacing:-0.372px;">Authentication Events vs Time (Last Day)</div>
<div class="x" style="left:940.50px;top:130px;font-size:12.6px;line-height:12.6px;color:#222;font-weight:bold;letter-spacing:-0.325px;">Recent Sense Offenses</div>
<div class="x" style="left:955.90px;top:336px;font-size:12.2px;line-height:12.2px;color:#222;font-weight:bold;letter-spacing:-0.194px;">Notes</div>
<div class="x" style="left:956.20px;top:158px;font-size:8.8px;line-height:8.8px;color:#777;letter-spacing:0.077px;">Offense # 9637</div>
<div class="x" style="left:1275.70px;top:158px;font-size:9.2px;line-height:9.2px;color:#5e5e5e;letter-spacing:-0.011px;">about 18 hours ago</div>
<div class="x" style="left:956.20px;top:171px;font-size:12.6px;line-height:12.6px;color:#222;letter-spacing:-0.462px;-webkit-text-stroke:0.35px #222;">Eisner, Paul (G.)</div>
<div class="x" style="left:956.20px;top:187px;font-size:11.5px;line-height:11.5px;color:#777;letter-spacing:-0.503px;">Categories: Sense Offense, User Risk</div>
<div class="x" style="left:956.20px;top:206px;font-size:11.5px;line-height:11.5px;color:#222;letter-spacing:-0.727px;">Event Count: 17</div>
<div class="x" style="left:1096.80px;top:206px;font-size:11.5px;line-height:11.5px;color:#222;letter-spacing:-0.521px;">Flow Count: 0</div>
<div class="x" style="left:1237.50px;top:206px;font-size:11.5px;line-height:11.5px;color:#222;letter-spacing:-0.427px;">Magnitude: 3</div>
<div class="x" style="left:1299.60px;top:209px;font-size:8px;line-height:8px;color:#888;letter-spacing:0.138px;">/10</div>
<div class="x" style="left:956.20px;top:240px;font-size:8.8px;line-height:8.8px;color:#777;letter-spacing:0.077px;">Offense # 9633</div>
<div class="x" style="left:1274.70px;top:239px;font-size:9.2px;line-height:9.2px;color:#5e5e5e;letter-spacing:0.048px;">about 23 hours ago</div>
<div class="x" style="left:956.20px;top:252px;font-size:12.6px;line-height:12.6px;color:#222;letter-spacing:-0.462px;-webkit-text-stroke:0.35px #222;">Eisner, Paul (G.)</div>
<div class="x" style="left:956.20px;top:269px;font-size:11.5px;line-height:11.5px;color:#777;letter-spacing:-0.503px;">Categories: User Risk, Sense Offense</div>
<div class="x" style="left:956.20px;top:287px;font-size:11.5px;line-height:11.5px;color:#222;letter-spacing:-0.583px;">Event Count: 8</div>
<div class="x" style="left:1096.80px;top:287px;font-size:11.5px;line-height:11.5px;color:#222;letter-spacing:-0.521px;">Flow Count: 0</div>
<div class="x" style="left:1237.50px;top:287px;font-size:11.5px;line-height:11.5px;color:#222;letter-spacing:-0.427px;">Magnitude: 3</div>
<div class="x" style="left:1299.60px;top:290px;font-size:8px;line-height:8px;color:#888;letter-spacing:0.138px;">/10</div>
<div class="x" style="left:1148.60px;top:479px;font-size:9.5px;line-height:9.5px;color:#aaa;letter-spacing:0.523px;">: )</div>
<div class="x" style="left:1095.40px;top:535px;font-size:10.7px;line-height:10.7px;color:#777;letter-spacing:-0.116px;">Be the first to add a note.</div>
<div class="x" style="left:752.60px;top:329px;font-size:9.8px;line-height:9.8px;color:#222;letter-spacing:-0.300px;">Resource Risk</div>
<div class="x" style="left:845.70px;top:329px;font-size:9.8px;line-height:9.8px;color:#222;letter-spacing:-0.295px;">User Access</div>
<div class="x" style="left:752.60px;top:344px;font-size:9.8px;line-height:9.8px;color:#222;letter-spacing:-0.299px;">User Geography</div>
<div class="x" style="left:410.40px;top:694px;font-size:7.3px;line-height:7.3px;color:#999;letter-spacing:-0.208px;">Highcharts.com</div>
<div class="x" style="left:860.60px;top:694px;font-size:7.3px;line-height:7.3px;color:#999;letter-spacing:-0.208px;">Highcharts.com</div>
</div>
</body>
</html>
